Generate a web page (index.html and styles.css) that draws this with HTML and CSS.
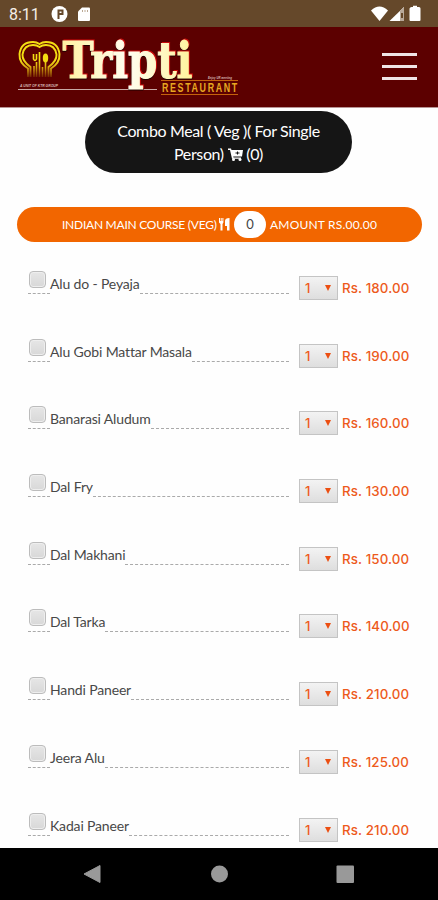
FILE: index.html
```html
<!DOCTYPE html>
<html lang="en">
<head>
<meta charset="utf-8">
<title>Tripti Restaurant</title>
<link rel="stylesheet" href="styles.css">
</head>
<body>
<div class="status">
  <span class="clock">8:11</span>
  <svg class="left-icons" width="40" height="18" viewBox="0 0 40 18"><circle cx="8.500" cy="9" r="8" fill="#fff"/><path d="M7.500 14V4.500M8 5.500h3.500v3.500H8" fill="none" stroke="#65482a" stroke-width="2"/><path d="M31 2.500h7q1 0 1 1V15q0 1-1 1H28q-1 0-1-1V6.500z" fill="#fff"/><path d="M31.500 5v2M34 5v2M36.500 5v2" stroke="#bba994"/></svg>
  <svg class="right-icons" width="52" height="18" viewBox="0 0 52 18"><path d="M0 5.500Q8.500-2.500 17 5.500L8.500 16z" fill="#fff"/><path d="M18.500 16L33 2v14z" fill="#fff"/><path d="M29 6l4-4v14h-4z" fill="#b7a899"/><path d="M31 8v5" stroke="#65482a" stroke-width="2"/><path d="M42 2V.8h4V2h2q1.500 0 1.500 1.500V15q0 1-1 1h-9q-1 0-1-1V3.500Q39 2 40.500 2z" fill="#fff"/></svg>
</div>
<header class="header">
  <svg class="logo" width="222" height="60" viewBox="18 38 222 60">
    <defs>
      <linearGradient id="gold" x1="0" y1="60" x2="0" y2="78" gradientUnits="userSpaceOnUse"><stop offset="0" stop-color="#f3de12"/><stop offset=".4" stop-color="#d6a810"/><stop offset="1" stop-color="#6a1800"/></linearGradient>
      <linearGradient id="cream" x1="62" y1="0" x2="194" y2="0" gradientUnits="userSpaceOnUse"><stop offset="0" stop-color="#fff2a0"/><stop offset=".5" stop-color="#fffdf0"/><stop offset="1" stop-color="#fff29a"/></linearGradient>
    </defs>
    <path d="M18 89.500H157" stroke="#c9a9a5"/>
    <g fill="none" stroke="url(#gold)">
      <path d="M28 77V68.500Q19 63 19.500 54Q21 42 33 42Q36.500 42 39.500 44Q42.500 42 46 42Q58 42 59.500 54Q60 63 51 68.500V77" stroke-width="1.900"/>
      <path d="M30.500 77V67Q22 61 22.500 54.500Q24 45 33 45Q37 45 39.500 47Q42 45 46 45Q55 45 56.500 54.500Q57 61 48.500 67V77" stroke-width="1.900"/>
      <path d="M34 77V66M36.500 77V62M39.500 77V52M42.500 77V67M45.500 77V58M33.500 54v5q1.500 3 3 0V54" stroke-width="1.600"/>
    </g>
    <ellipse cx="45.500" cy="58" rx="2.700" ry="4.500" fill="url(#gold)"/>
    <text class="brand" x="62.500" y="77.500" textLength="130" lengthAdjust="spacingAndGlyphs" fill="url(#cream)" stroke="url(#cream)">Tripti</text>
    <text class="tiny" x="20" y="86.500" textLength="38" lengthAdjust="spacingAndGlyphs">A UNIT OF KTR GROUP</text>
    <text class="tiny" x="208" y="78.500" textLength="24" lengthAdjust="spacingAndGlyphs">Enjoy UR meeting</text>
    <path d="M161 80.500H238M161 94.500H238" stroke="#c4620c"/>
    <text class="sub" transform="translate(162 92.300) scale(.66 1)" textLength="114">RESTAURANT</text>
  </svg>
  <div class="burger"><i></i><i></i><i></i></div>
</header>
<main class="page">
  <div class="combo">
    <div class="combo-a">Combo Meal ( Veg )( For Single</div>
    <div class="combo-b">Person) <svg width="15" height="13" viewBox="0 0 15 13"><path d="M0 .5h3l.5 1.500H15l-1 6.500H5.200l.3 1H13v1.300H4L2 2H0z" fill="#fff"/><path d="M7.500 5h4M9.500 3.500v3" stroke="#151515"/><circle cx="5.500" cy="11.500" r="1.500" fill="#fff"/><circle cx="12" cy="11.500" r="1.500" fill="#fff"/></svg> (0)</div>
  </div>
  <div class="course">
    <span class="course-name">INDIAN MAIN COURSE (VEG)</span>
    <svg class="fork" width="11" height="13" viewBox="0 0 11 13"><path d="M0 0h1v3h.7V0h1v3h.7V0h1v4.500L3.500 6v6.500h-2V6L0 4.500zM10.500 0v12.500H8V8H6V3q0-3 4.500-3z" fill="#fff"/></svg>
    <span class="count">0</span>
    <span class="amount">AMOUNT RS.00.00</span>
  </div>
  <div class="menu">
    <div class="row"><span class="tick"><i></i></span><span class="name">Alu do - Peyaja</span><span class="dots"></span><span class="qty">1<b></b></span><span class="price">Rs. 180.00</span></div>
    <div class="row"><span class="tick"><i></i></span><span class="name">Alu Gobi Mattar Masala</span><span class="dots"></span><span class="qty">1<b></b></span><span class="price">Rs. 190.00</span></div>
    <div class="row"><span class="tick"><i></i></span><span class="name">Banarasi Aludum</span><span class="dots"></span><span class="qty">1<b></b></span><span class="price">Rs. 160.00</span></div>
    <div class="row"><span class="tick"><i></i></span><span class="name">Dal Fry</span><span class="dots"></span><span class="qty">1<b></b></span><span class="price">Rs. 130.00</span></div>
    <div class="row"><span class="tick"><i></i></span><span class="name">Dal Makhani</span><span class="dots"></span><span class="qty">1<b></b></span><span class="price">Rs. 150.00</span></div>
    <div class="row"><span class="tick"><i></i></span><span class="name">Dal Tarka</span><span class="dots"></span><span class="qty">1<b></b></span><span class="price">Rs. 140.00</span></div>
    <div class="row"><span class="tick"><i></i></span><span class="name">Handi Paneer</span><span class="dots"></span><span class="qty">1<b></b></span><span class="price">Rs. 210.00</span></div>
    <div class="row"><span class="tick"><i></i></span><span class="name">Jeera Alu</span><span class="dots"></span><span class="qty">1<b></b></span><span class="price">Rs. 125.00</span></div>
    <div class="row"><span class="tick"><i></i></span><span class="name">Kadai Paneer</span><span class="dots"></span><span class="qty">1<b></b></span><span class="price">Rs. 210.00</span></div>
  </div>
</main>
<nav class="nav">
  <svg width="438" height="52" viewBox="0 0 438 52"><path d="M84 26L100 17.500V34.500z" fill="#999" stroke="#999" stroke-linejoin="round"/><circle cx="219.500" cy="26" r="8.500" fill="#999"/><rect x="336.500" y="17.500" width="17.500" height="17.500" rx="1" fill="#999"/></svg>
</nav>
</body>
</html>
```
FILE: styles.css
```css
* { box-sizing: border-box; }
body {
  margin: 0;
  width: 438px;
  height: 900px;
  overflow: hidden;
  display: flex;
  flex-direction: column;
  background: #fefefe;
  font-family: Lato, sans-serif;
}
.status {
  height: 27px;
  flex: none;
  display: flex;
  align-items: center;
  padding: 1px 15px 0 9px;
  background: #65482a;
}
.clock {
  width: 42px;
  font: 400 16px Roboto, sans-serif;
  color: #f4eee7;
}
.right-icons { margin-left: auto; }
.header {
  height: 81px;
  flex: none;
  display: flex;
  justify-content: space-between;
  padding: 11px 21px 0 18px;
  background: #5c0000;
  border-bottom: 1px solid #b89494;
}
.logo { overflow: visible; }
.brand {
  font: bold 50px "DejaVu Serif", serif;
  font-stretch: condensed;
  stroke-width: 1px;
  filter: drop-shadow(1px -.5px 0 #c90b0b) drop-shadow(.5px 1.5px 0 #210000);
}
.tiny { font: italic bold 4px "Liberation Sans", sans-serif; fill: #d8bcb8; }
.sub { font: bold 13.5px "Liberation Sans", sans-serif; fill: #e8a820; }
.burger {
  width: 35px;
  height: 27px;
  margin-top: 15px;
  display: flex;
  flex-direction: column;
  justify-content: space-between;
}
.burger i { height: 3px; background: #f0e4e6; }
.page { flex: 1; min-height: 0; overflow: hidden; }
.combo {
  width: 267px;
  height: 62px;
  margin: 3px 0 0 85px;
  padding-top: 9px;
  border-radius: 31px;
  background: #151515;
  color: #fff;
  font-size: 16px;
  line-height: 22.5px;
  letter-spacing: -.37px;
  text-align: center;
  white-space: nowrap;
}
.combo svg { vertical-align: -1px; }
.course {
  width: 405px;
  height: 35px;
  margin: 34px 0 0 17px;
  padding-left: 45px;
  display: flex;
  align-items: center;
  border-radius: 18px;
  background: #f26600;
  color: #fff;
  font-size: 12px;
  white-space: nowrap;
}
.course-name { width: 157px; letter-spacing: -.25px; }
.amount { letter-spacing: .2px; margin-left: -1px; }
.count {
  width: 32px;
  height: 27px;
  margin: 0 5px 0 4px;
  border-radius: 14px;
  background: #fff;
  color: #444;
  font-size: 13px;
  line-height: 27px;
  text-align: center;
}
.menu { padding: 28px 27px 0 28px; }
.row {
  height: 67.7px;
  display: flex;
  align-items: flex-start;
  white-space: nowrap;
}
.tick {
  width: 22px;
  height: 24px;
  padding: 1px 0 0 1px;
  border-bottom: 1px dashed #aaa;
}
.tick i {
  display: block;
  width: 17px;
  height: 17px;
  border: 1px solid #bcbcbc;
  border-radius: 4px;
  background: linear-gradient(#e6e6e6, #d8d8d8);
  box-shadow: inset 0 0 0 1px #eee;
}
.name {
  height: 24px;
  line-height: 27px;
  font-size: 14px;
  letter-spacing: -.15px;
  color: #484848;
}
.dots { flex: 1; height: 24px; border-bottom: 1px dashed #aaa; }
.qty {
  width: 39px;
  height: 24px;
  margin: 6px 4px 0 10px;
  padding: 0 6px 0 5px;
  display: flex;
  align-items: center;
  justify-content: space-between;
  border: 1px solid #c4c4c4;
  background: linear-gradient(#f3f3f3, #dedede);
  font: 500 13px Inter, sans-serif;
  color: #ef5a20;
}
.qty b {
  border: 3px solid transparent;
  border-top: 6px solid #ec4f12;
  border-bottom: 0;
}
.price {
  width: 69px;
  height: 24px;
  margin-top: 6px;
  font: 500 13.3px/25px Inter, sans-serif;
  letter-spacing: .12px;
  color: #ed5a1c;
}
.nav { height: 52px; flex: none; background: #000; }
.nav svg { display: block; }
```
